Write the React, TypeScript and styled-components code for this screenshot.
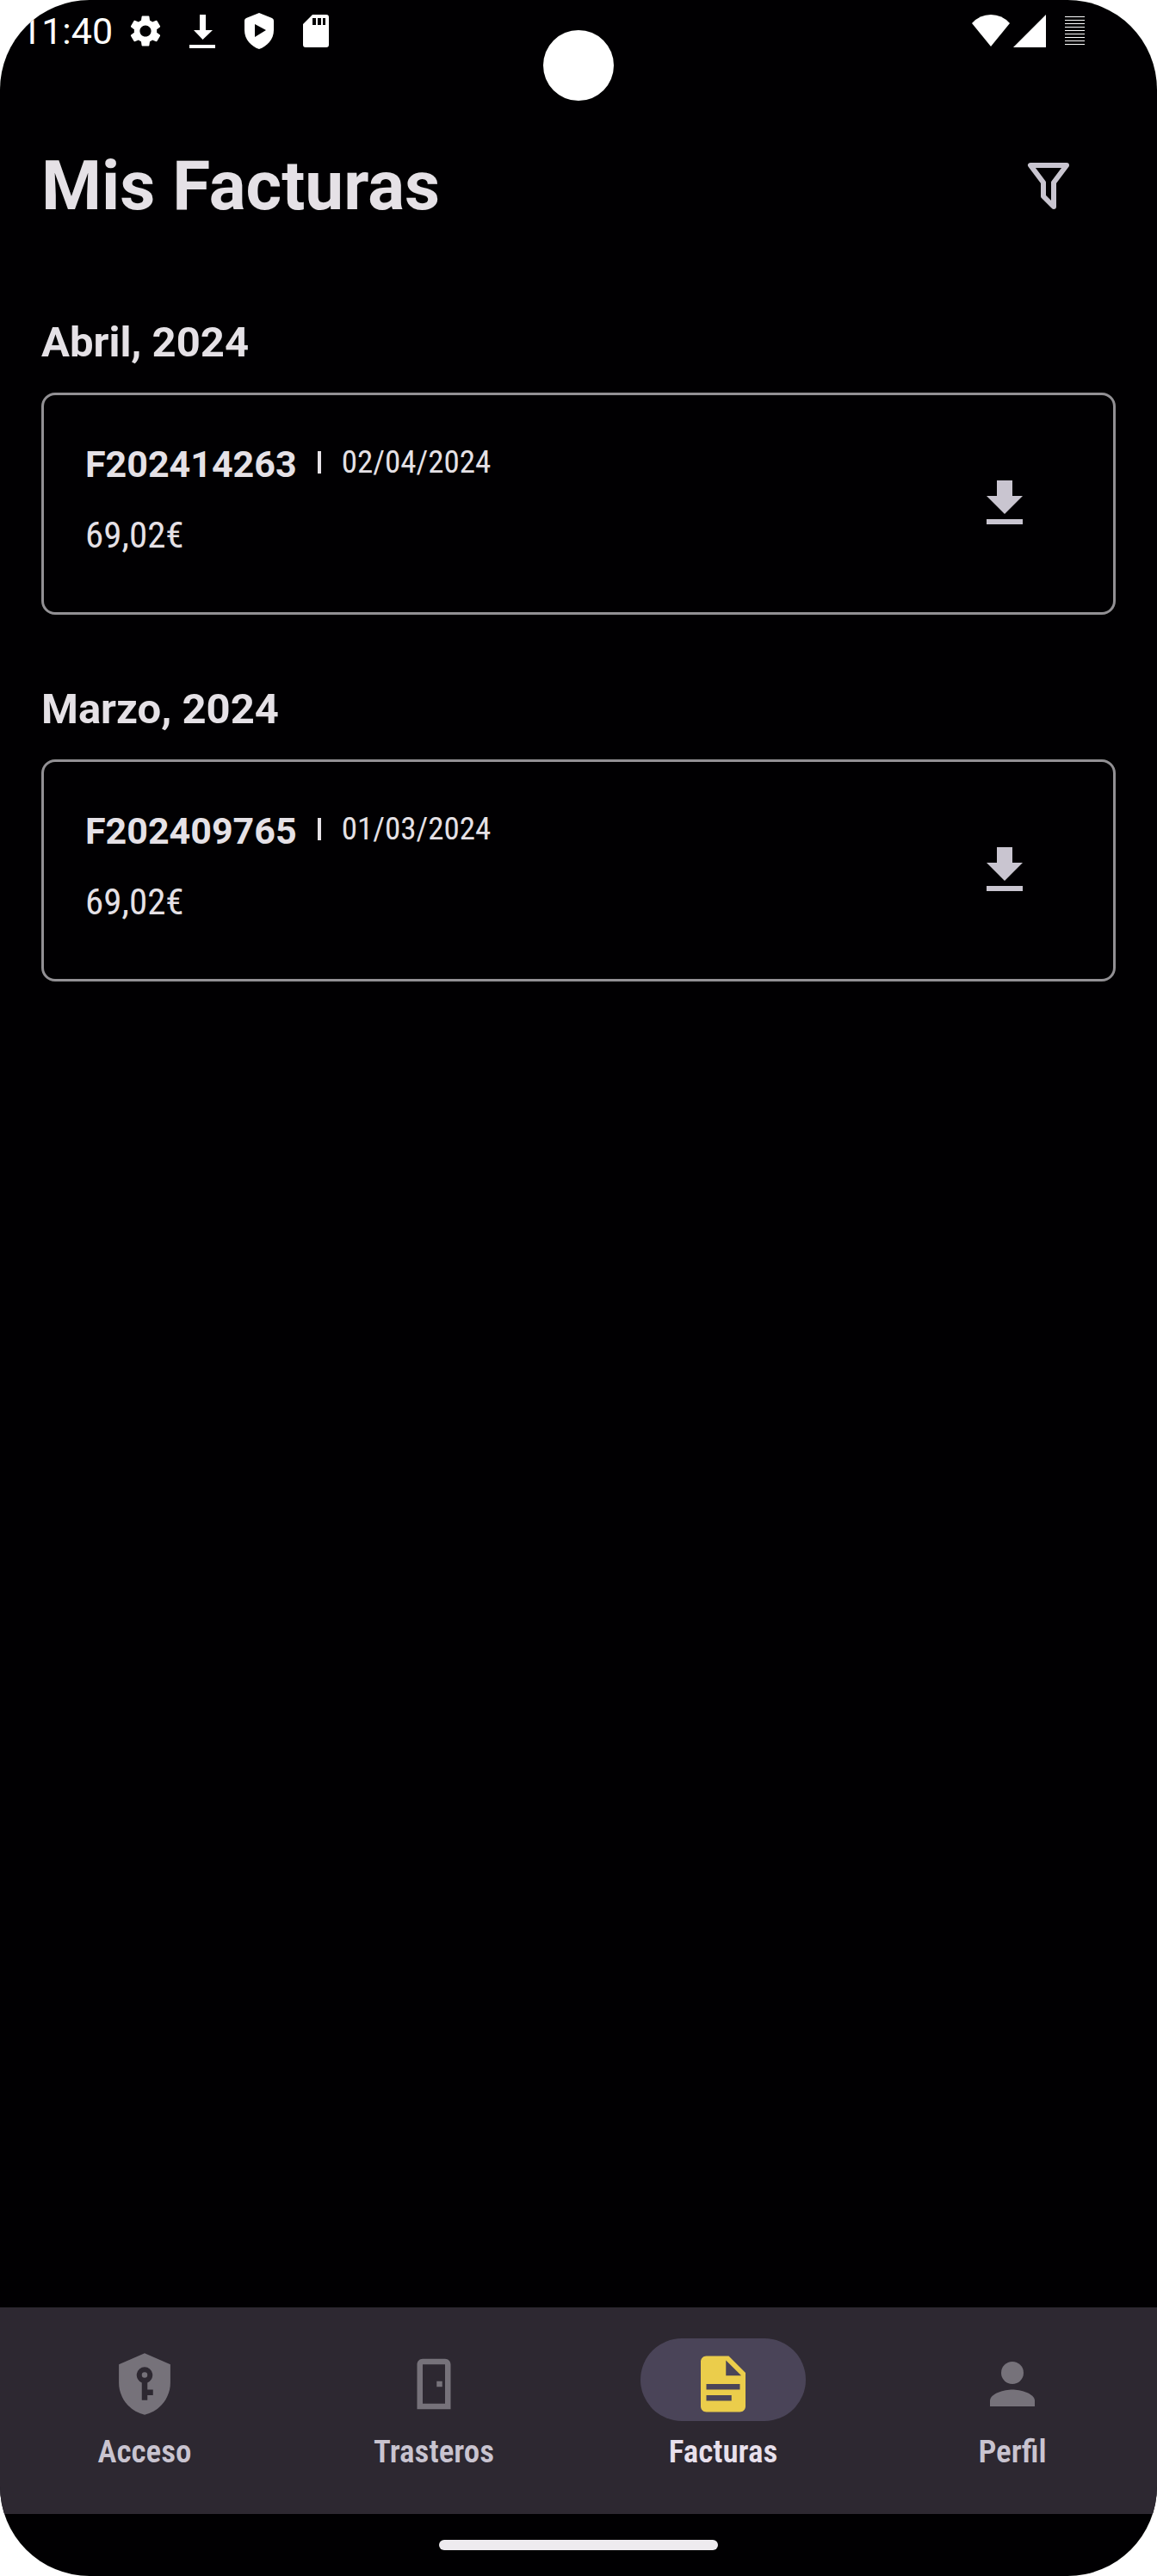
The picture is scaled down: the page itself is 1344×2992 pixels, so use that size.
import React from "react";
import styled, { createGlobalStyle } from "styled-components";
import { MdSettings } from "react-icons/md";

const GlobalStyle = createGlobalStyle`
  *, *::before, *::after { box-sizing: border-box; }
  body { margin: 0; background: #fff; }
`;

const condensed = `"Roboto Condensed", Roboto, sans-serif`;

const Screen = styled.div`
  position: relative;
  display: flex;
  flex-direction: column;
  min-height: 100vh;
  overflow: hidden;
  border-radius: 104px;
  background: #010002;
  color: #e5e1e6;
  font-family: Roboto, sans-serif;
`;

const StatusBar = styled.div`
  display: flex;
  align-items: center;
  justify-content: space-between;
  height: 72px;
  padding: 0 74px 0 24px;
  color: #fff;
`;

const StatusGroup = styled.div<{ $gap: number }>`
  display: flex;
  align-items: center;
  gap: ${(p) => p.$gap}px;
`;

const Clock = styled.time`
  font-size: 43px;
  line-height: 52px;
`;

const StatusIcon = styled.svg`
  display: block;
  width: 44px;
  height: 44px;
  fill: currentColor;
`;

const Camera = styled.div`
  position: absolute;
  top: 35px;
  left: 50%;
  width: 82px;
  height: 82px;
  margin-left: -41px;
  border-radius: 50%;
  background: #fff;
`;

const Header = styled.header`
  display: flex;
  align-items: center;
  justify-content: space-between;
  height: 288px;
  padding: 0 54px 0 48px;
`;

const Title = styled.h1`
  margin: 0;
  font-size: 80px;
  font-weight: 700;
  line-height: 96px;
`;

const IconButton = styled.button`
  display: grid;
  place-items: center;
  width: 144px;
  height: 144px;
  padding: 0;
  border: 0;
  border-radius: 50%;
  background: transparent;
  color: #c9c5d0;
  cursor: pointer;

  svg {
    width: 72px;
    height: 72px;
  }
`;

const Main = styled.main`
  display: flex;
  flex: 1;
  flex-direction: column;
  gap: 78px;
  padding: 6px 48px;
`;

const Month = styled.section`
  display: flex;
  flex-direction: column;
  gap: 26px;
`;

const MonthTitle = styled.h2`
  margin: 0;
  font-size: 49px;
  font-weight: 700;
  line-height: 64px;
`;

const Card = styled.article`
  display: flex;
  align-items: flex-start;
  justify-content: space-between;
  padding: 54px 54px 54px 48px;
  border: 3px solid #929094;
  border-radius: 16px;
`;

const CardText = styled.div`
  display: flex;
  flex-direction: column;
  gap: 30px;
`;

const InvoiceLine = styled.div`
  display: flex;
  align-items: flex-start;
`;

const InvoiceNumber = styled.strong`
  font-size: 43px;
  font-weight: 700;
  line-height: 52px;
`;

const Divider = styled.span`
  width: 4px;
  height: 26px;
  margin: 11px 24px 0;
  background: #e5e1e6;
`;

const InvoiceDate = styled.time`
  font-family: ${condensed};
  font-size: 37px;
  line-height: 48px;
`;

const Amount = styled.span`
  font-family: ${condensed};
  font-size: 43px;
  line-height: 52px;
`;

const Nav = styled.nav`
  display: grid;
  grid-template-columns: repeat(4, 1fr);
  height: 240px;
  padding-top: 36px;
  background: #2d2831;
`;

const NavItem = styled.a<{ $active: boolean }>`
  display: flex;
  flex-direction: column;
  align-items: center;
  gap: 12px;
  color: ${(p) => (p.$active ? "#e8e0ec" : "#c9c4d0")};
  text-decoration: none;
`;

const Pill = styled.span<{ $active: boolean }>`
  display: grid;
  place-items: center;
  width: 192px;
  height: 96px;
  padding-top: 9px;
  border-radius: 48px;
  background: ${(p) => (p.$active ? "#4a4458" : "transparent")};
  color: ${(p) => (p.$active ? "#ebcd4b" : "#76727a")};

  svg {
    width: 78px;
    height: 78px;
    fill: currentColor;
  }
`;

const NavLabel = styled.span`
  font-family: ${condensed};
  font-size: 37px;
  font-weight: 600;
  line-height: 48px;
`;

const GestureArea = styled.footer`
  display: grid;
  place-items: center;
  height: 72px;
`;

const GestureBar = styled.div`
  width: 324px;
  height: 12px;
  border-radius: 6px;
  background: #eeebef;
`;

const invoices = [
  { month: "Abril, 2024", number: "F202414263", date: "02/04/2024", iso: "2024-04-02", amount: "69,02€" },
  { month: "Marzo, 2024", number: "F202409765", date: "01/03/2024", iso: "2024-03-01", amount: "69,02€" },
];

const tabs = [
  {
    label: "Acceso",
    icon: (
      <svg viewBox="0 0 24 24" fillRule="evenodd" aria-hidden="true">
        <path d="M12 1 21.2 5v6.5C21.2 17 17.3 21.8 12 23 6.7 21.8 2.8 17 2.8 11.5V5zM12 5.9a2.9 2.9 0 0 0-1 5.6V17.8h2V16h2v-2h-2v-2.5a2.9 2.9 0 0 0-1-5.6z" />
        <circle cx="12" cy="8.8" r="1" />
      </svg>
    ),
  },
  {
    label: "Trasteros",
    icon: (
      <svg viewBox="0 0 24 24" fillRule="evenodd" aria-hidden="true">
        <path d="M8 3h8c1.1 0 2 .9 2 2v16H6V5c0-1.1.9-2 2-2zM8 5v14h8V5zM13 11h2v2h-2z" />
      </svg>
    ),
  },
  {
    label: "Facturas",
    active: true,
    icon: (
      <svg viewBox="0 0 24 24" fillRule="evenodd" aria-hidden="true">
        <path d="M14 2H6c-1.1 0-2 .9-2 2v16c0 1.1.9 2 2 2h12c1.1 0 2-.9 2-2V8zM13 3.5V9h5.5zM6 12h12v2H6zM6 16h9v2H6z" />
      </svg>
    ),
  },
  {
    label: "Perfil",
    icon: (
      <svg viewBox="0 0 24 24" aria-hidden="true">
        <circle cx="12" cy="8" r="4" />
        <path d="M12 14c-2.67 0-8 1.34-8 4v2h16v-2c0-2.66-5.33-4-8-4z" />
      </svg>
    ),
  },
];

export default function App() {
  return (
    <>
      <GlobalStyle />
      <Screen>
        <StatusBar>
          <StatusGroup $gap={16}>
            <Clock>11:40</Clock>
            <StatusGroup $gap={22}>
              <StatusIcon as={MdSettings} aria-hidden="true" />
              <StatusIcon viewBox="0 0 44 44" aria-hidden="true">
                <path d="M19 3h7v18h8L22.5 32 12 21h7zM7 38h30v4H7z" />
              </StatusIcon>
              <StatusIcon viewBox="0 0 44 44" fillRule="evenodd" aria-hidden="true">
                <path d="M22 1 37 7Q39 8 39 10V21C39 32 31 40 22 43 13 40 5 32 5 21V10Q5 8 7 7zM17 14V29L30 21z" />
              </StatusIcon>
              <StatusIcon viewBox="0 0 44 44" fillRule="evenodd" aria-hidden="true">
                <path d="M18 3H34a3 3 0 0 1 3 3V38a3 3 0 0 1-3 3H10a3 3 0 0 1-3-3V14zM18 7v8h4V7zM24 7v8h4V7zM30 7v8h3V7z" />
              </StatusIcon>
            </StatusGroup>
          </StatusGroup>
          <StatusGroup $gap={8}>
            <StatusGroup $gap={1}>
              <StatusIcon viewBox="0 0 44 44" aria-hidden="true">
                <path d="M0 13Q9 3 22 3T44 13L22 40z" />
              </StatusIcon>
              <StatusIcon viewBox="0 0 44 44" aria-hidden="true">
                <path d="M41 3V41H3z" />
              </StatusIcon>
            </StatusGroup>
            <StatusIcon viewBox="0 0 44 44" shapeRendering="crispEdges" aria-hidden="true">
              {Array.from({ length: 9 }, (_, i) => (
                <rect key={i} x="11" y={5 + i * 4} width="23" height="1" />
              ))}
            </StatusIcon>
          </StatusGroup>
        </StatusBar>
        <Camera />

        <Header>
          <Title>Mis Facturas</Title>
          <IconButton type="button" aria-label="Filtrar">
            <svg
              viewBox="0 0 72 72"
              fill="none"
              stroke="currentColor"
              strokeWidth="6"
              strokeLinejoin="round"
              aria-hidden="true"
            >
              <path d="M15 12H57L42 32V60L30 48V32z" />
            </svg>
          </IconButton>
        </Header>

        <Main>
          {invoices.map((invoice) => (
            <Month key={invoice.number}>
              <MonthTitle>{invoice.month}</MonthTitle>
              <Card>
                <CardText>
                  <InvoiceLine>
                    <InvoiceNumber>{invoice.number}</InvoiceNumber>
                    <Divider />
                    <InvoiceDate dateTime={invoice.iso}>{invoice.date}</InvoiceDate>
                  </InvoiceLine>
                  <Amount>{invoice.amount}</Amount>
                </CardText>
                <IconButton type="button" aria-label={`Descargar ${invoice.number}`}>
                  <svg viewBox="0 0 24 24" fill="currentColor" aria-hidden="true">
                    <path d="M19 9h-4V3H9v6H5l7 7zM5 18v2h14v-2z" />
                  </svg>
                </IconButton>
              </Card>
            </Month>
          ))}
        </Main>

        <Nav aria-label="Principal">
          {tabs.map(({ label, icon, active = false }) => (
            <NavItem key={label} href="#" $active={active} aria-current={active ? "page" : undefined}>
              <Pill $active={active}>{icon}</Pill>
              <NavLabel>{label}</NavLabel>
            </NavItem>
          ))}
        </Nav>
        <GestureArea>
          <GestureBar />
        </GestureArea>
      </Screen>
    </>
  );
}
